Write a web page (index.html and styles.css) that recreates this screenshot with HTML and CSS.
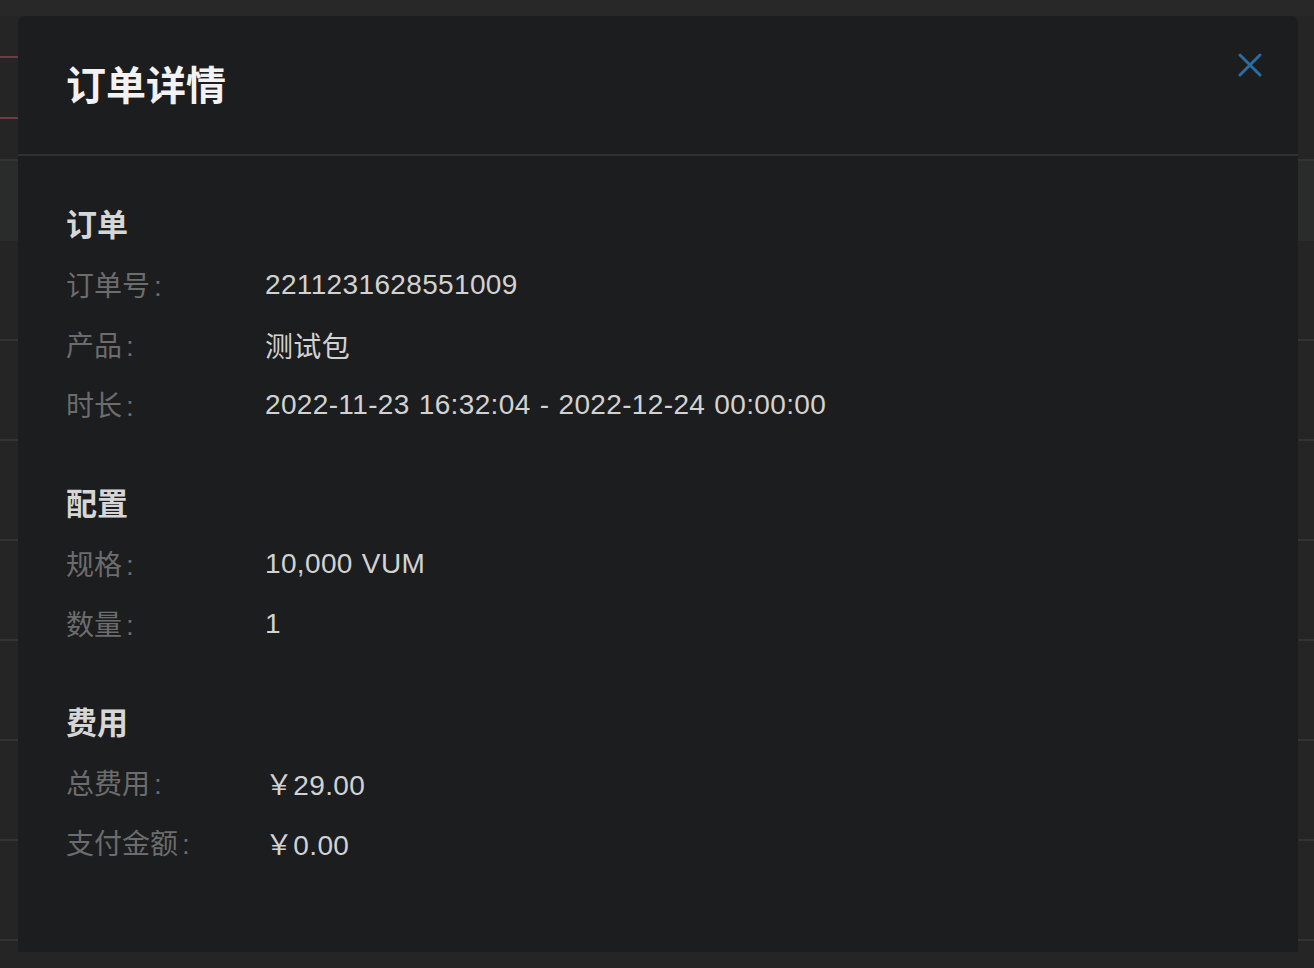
FILE: index.html
```html
<!DOCTYPE html>
<html lang="zh-CN">
<head>
<meta charset="utf-8">
<title>订单详情</title>
<link rel="stylesheet" href="styles.css">
</head>
<body>
<div class="page">
  <div class="page-top"></div>
  <div class="alert-line first"></div>
  <div class="alert-line second"></div>
  <div class="table-head"></div>
  <div class="table-row"></div>
  <div class="table-row"></div>
  <div class="table-row"></div>
  <div class="table-row"></div>
  <div class="table-row"></div>
  <div class="table-row"></div>
  <div class="table-row"></div>
</div>

<div class="modal">
  <div class="modal-header">
    <h1 class="modal-title">订单详情</h1>
    <button class="close-btn" aria-label="关闭">
      <svg width="24" height="24" viewBox="0 0 24 24"><path d="M2 2 L22 22 M22 2 L2 22" stroke="#2b6ca3" stroke-width="3" stroke-linecap="round" fill="none"/></svg>
    </button>
  </div>
  <div class="modal-body">
    <section class="section">
      <h2 class="section-title">订单</h2>
      <div class="row"><span class="label">订单号<span class="colon">:</span></span><span class="value">2211231628551009</span></div>
      <div class="row"><span class="label">产品<span class="colon">:</span></span><span class="value">测试包</span></div>
      <div class="row"><span class="label">时长<span class="colon">:</span></span><span class="value">2022-11-23 16:32:04 - 2022-12-24 00:00:00</span></div>
    </section>
    <section class="section">
      <h2 class="section-title">配置</h2>
      <div class="row"><span class="label">规格<span class="colon">:</span></span><span class="value">10,000 VUM</span></div>
      <div class="row"><span class="label">数量<span class="colon">:</span></span><span class="value">1</span></div>
    </section>
    <section class="section">
      <h2 class="section-title">费用</h2>
      <div class="row"><span class="label">总费用<span class="colon">:</span></span><span class="value">￥29.00</span></div>
      <div class="row"><span class="label">支付金额<span class="colon">:</span></span><span class="value">￥0.00</span></div>
    </section>
  </div>
</div>
</body>
</html>
```
FILE: styles.css
```css
html, body {
  margin: 0;
  padding: 0;
  background: #252525;
  font-family: "Liberation Sans", "Noto Sans CJK SC", sans-serif;
  overflow: hidden;
}

.page {
  width: 1314px;
  height: 968px;
  display: flex;
  flex-direction: column;
}

.page-top {
  height: 16px;
  background: #282828;
  flex: none;
}

.alert-line {
  height: 2px;
  width: 200px;
  background: #6e3c40;
  flex: none;
}
.alert-line.first { margin-top: 40px; }
.alert-line.second { margin-top: 59px; }

.table-head {
  margin-top: 40px;
  height: 80px;
  background: #2a2c2c;
  border-top: 2px solid #323333;
  flex: none;
}

.table-row {
  height: 98px;
  border-bottom: 2px solid #333333;
  flex: none;
}

.modal {
  position: absolute;
  left: 18px;
  top: 16px;
  width: 1280px;
  height: 936px;
  background: #1c1d1f;
  border-radius: 7px 7px 0 0;
}

.modal-header {
  position: relative;
  height: 140px;
  box-sizing: border-box;
  border-bottom: 2px solid #2f3032;
  padding-left: 48px;
  display: flex;
  align-items: center;
}

.modal-title {
  margin: 0;
  font-size: 40px;
  font-weight: 700;
  color: #f2f2f2;
  line-height: 1;
  padding-top: 2px;
}

.close-btn {
  position: absolute;
  right: 35px;
  top: 36px;
  width: 26px;
  height: 26px;
  padding: 1px;
  border: 0;
  background: transparent;
  display: flex;
  align-items: center;
  justify-content: center;
}

.modal-body {
  padding: 38px 48px 0;
  display: flex;
  flex-direction: column;
  gap: 39px;
}

.section {
  display: flex;
  flex-direction: column;
}

.section-title {
  margin: 0;
  height: 60px;
  box-sizing: border-box;
  padding-bottom: 3px;
  display: flex;
  align-items: center;
  font-size: 31px;
  font-weight: 700;
  color: #d6d6d6;
}

.row {
  display: flex;
  height: 60px;
  align-items: center;
  font-size: 28px;
}

.label {
  width: 199px;
  flex: none;
  color: #6c6c6c;
}

.colon {
  margin-left: 4px;
}

.value {
  color: #d2d2d2;
  letter-spacing: 0.35px;
  word-spacing: 1px;
  padding-top: 2px;
}
```
